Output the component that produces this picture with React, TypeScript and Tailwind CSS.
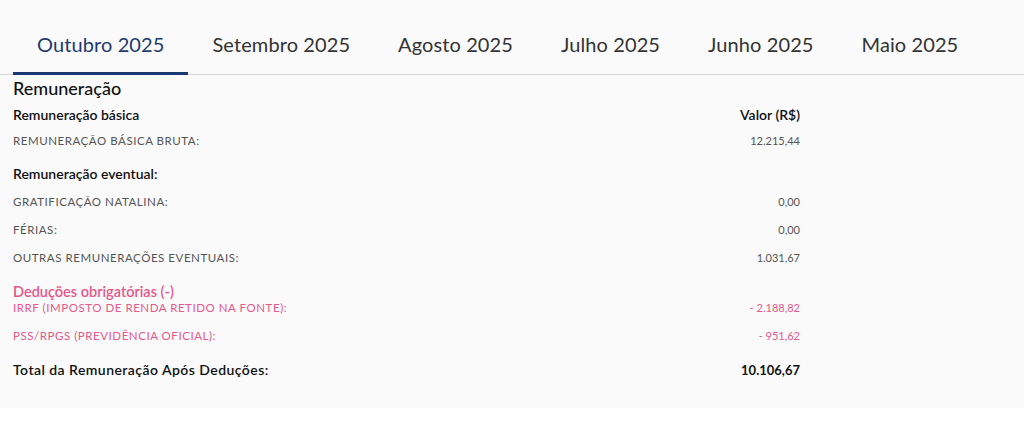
import React from 'react';

const tabs = ['Outubro 2025', 'Setembro 2025', 'Agosto 2025', 'Julho 2025', 'Junho 2025', 'Maio 2025'];

type Row = { label: string; value: string };

const Line: React.FC<Row & { pink?: boolean; className?: string }> = ({ label, value, pink, className = '' }) => (
  <div className={`flex items-center justify-between leading-[16px] ${pink ? 'text-[#e8578a]' : 'text-[#555]'} ${className}`}>
    <span className="text-[11.5px] uppercase tracking-[0.55px]">{label}</span>
    <span className="text-[11px]">{value}</span>
  </div>
);

export default function App() {
  return (
    <div className="min-h-[423px] bg-white" style={{ fontFamily: 'Lato, "Open Sans", sans-serif' }}>
      <div className="bg-[#fafafa] h-[408px]">
        <div className="pt-[29px] border-b border-[#d4d4d4] flex pl-[13px]">
          {tabs.map((t, i) => (
            <div
              key={t}
              className={`px-6 pb-[13px] text-[20px] leading-[30px] tracking-[0.1px] border-b-[3px] -mb-px ${
                i === 0 ? 'text-[#1e3a6e] border-[#173a72]' : 'text-[#333] border-transparent'
              }`}
            >
              {t}
            </div>
          ))}
        </div>

        <div className="pl-[13px] w-[800px]">
          <h2 className="text-[18px] font-medium text-[#111] leading-[22px] mt-[2px]">Remuneração</h2>
          <div className="flex justify-between text-[14px] font-semibold text-[#111] mt-[7px] leading-[18px]">
            <span>Remuneração básica</span>
            <span>Valor (R$)</span>
          </div>
          <Line label="Remuneração básica bruta:" value="12.215,44" className="mt-[9px]" />

          <div className="text-[14px] font-semibold text-[#111] mt-[16px] leading-[18px]">Remuneração eventual:</div>
          <Line label="Gratificação natalina:" value="0,00" className="mt-[11px]" />
          <Line label="Férias:" value="0,00" className="mt-[12px]" />
          <Line label="Outras remunerações eventuais:" value="1.031,67" className="mt-[12px]" />

          <div className="text-[14.5px] font-semibold text-[#e8578a] mt-[17px] leading-[18px]">Deduções obrigatórias (-)</div>
          <Line label="IRRF (Imposto de renda retido na fonte):" value="- 2.188,82" pink className="-mt-px" />
          <Line label="PSS/RPGS (Previdência oficial):" value="- 951,62" pink className="mt-[12px]" />

          <div className="flex justify-between leading-[18px] font-semibold text-[#111] mt-[17px]">
            <span className="text-[14px] tracking-[0.45px]">Total da Remuneração Após Deduções:</span>
            <span className="text-[13px] font-bold">10.106,67</span>
          </div>
        </div>
      </div>
    </div>
  );
}
